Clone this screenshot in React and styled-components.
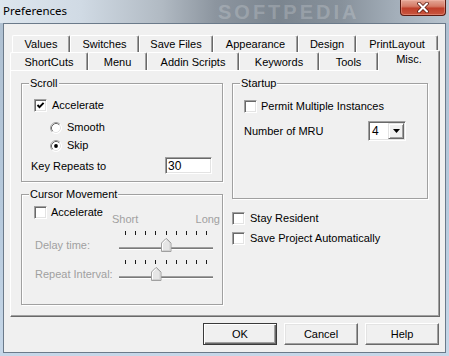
import React from 'react';
import styled, { createGlobalStyle, css } from 'styled-components';

const Global = createGlobalStyle`
  html, body { margin: 0; padding: 0; }
  body {
    width: 449px; height: 356px; overflow: hidden;
    font-family: "Liberation Sans", Arial, sans-serif; font-size: 11px; color: #000;
    background: #b4c8dc;
  }
  * { box-sizing: border-box; }
`;

const Window = styled.div`
  width: 449px; height: 356px;
  display: flex; flex-direction: column;
  background: linear-gradient(180deg, #aebfd0 0%, #b7cadd 60%, #c6d7e8 100%);
`;

const TitleBar = styled.div`
  position: relative; flex: none; height: 23px;
  display: flex; align-items: flex-start;
  background: linear-gradient(90deg, #dde6ee 0%, #d0dae4 18%, #b1bac3 36%, #8c959f 48%, #7b858f 62%, #87919b 76%, #a3aeb9 88%, #b8c4cf 100%);
`;

const Title = styled.span`
  padding: 3px 0 0 3px;
  font-family: "Noto Sans", "Open Sans", sans-serif; font-size: 11.5px; line-height: 15px;
  color: #000; position: relative; z-index: 1;
`;

const Watermark = styled.span`
  position: absolute; left: 218px; top: 2px;
  font-family: "Liberation Sans", Arial, sans-serif; font-weight: bold; font-size: 20px; line-height: 20px;
  letter-spacing: 3px; color: rgba(255, 255, 255, 0.2);
`;

const CloseButton = styled.div`
  margin-left: auto; margin-right: 3px; width: 46px; height: 16px;
  border: 1px solid #5c1a10; border-top: none; border-radius: 0 0 4px 4px;
  background: linear-gradient(180deg, #e4a897 0%, #d57a66 42%, #bf3f2a 55%, #c9563f 100%);
  box-shadow: inset 0 0 0 1px rgba(255, 200, 190, 0.35);
  display: flex; align-items: center; justify-content: center;
  position: relative; z-index: 1;
`;

const Client = styled.div`
  flex: 1; margin: 0 3px 3px 3px;
  border: 1px solid #6b7a8a; background: #f0f0f0;
  padding: 11px 5px 7px 6px;
  display: flex; flex-direction: column;
`;

const TabRow = styled.div`
  display: flex; height: ${p => p.$h}px; padding-left: ${p => p.$indent}px;
  position: relative; z-index: ${p => p.$z};
`;

const Tab = styled.div`
  width: ${p => p.$w}px; height: 100%;
  border: 1px solid; border-color: #fff #696969 transparent #fff; border-bottom: none;
  box-shadow: inset -1px 0 0 #a0a0a0;
  border-radius: 2px 2px 0 0;
  background: #f0f0f0;
  display: flex; align-items: center; justify-content: center;
  padding-top: ${p => p.$pt || 0}px;
  white-space: nowrap; line-height: 13px;
  position: relative;
  ${p => p.$selected && css`
    height: calc(100% + 3px); margin-top: -2px; padding-top: 0; padding-bottom: 4px; z-index: 3;
  `}
`;

const Panel = styled.div`
  position: relative; z-index: 1;
  height: 247px;
  border: 1px solid; border-color: #fff #696969 #696969 #fff;
  box-shadow: inset -1px -1px 0 #a0a0a0;
  display: grid; grid-template-columns: 202px 196px; column-gap: 9px; align-items: start;
  padding: 12px 0 0 10px;
`;

const Column = styled.div`
  display: flex; flex-direction: column;
`;

const GroupBox = styled.div`
  position: relative;
  border: 1px solid #a0a0a0;
  box-shadow: 1px 1px 0 #fff, inset 1px 1px 0 #fff;
  display: flex; flex-direction: column;
  margin-top: ${p => p.$mt || 0}px;
  padding-bottom: ${p => p.$pb || 0}px;
`;

const Legend = styled.span`
  position: absolute; top: -7px; left: 7px;
  padding: 0 1px; background: #f0f0f0; line-height: 13px;
`;

const CheckRow = styled.label`
  display: flex; align-items: center; gap: ${p => p.$gap ?? 5}px;
  height: 13px; line-height: 13px;
  margin-top: ${p => p.$mt || 0}px; padding-left: ${p => p.$pl || 0}px;
  white-space: nowrap;
`;

const Box = styled.span`
  flex: none; width: 13px; height: 13px;
  background: #fff;
  border: 1px solid; border-color: #a0a0a0 #fff #fff #a0a0a0;
  box-shadow: inset 1px 1px 0 #696969, inset -1px -1px 0 #e3e3e3;
  display: flex; align-items: center; justify-content: center;
`;

const FieldRow = styled.div`
  display: flex; align-items: center; justify-content: space-between;
  margin-top: ${p => p.$mt || 0}px;
  padding: 0 ${p => p.$pr || 0}px 0 ${p => p.$pl || 0}px;
  height: ${p => p.$h}px;
`;

const TextField = styled.input`
  width: 47px; height: 17px; margin: 0;
  background: #fff; color: #000;
  border: 1px solid; border-color: #a0a0a0 #fff #fff #a0a0a0;
  box-shadow: inset 1px 1px 0 #696969, inset -1px -1px 0 #e3e3e3;
  font: 12px "Liberation Sans", Arial, sans-serif; padding: 0 2px; outline: none;
`;

const ScaleRow = styled.div`
  display: flex; justify-content: space-between; align-items: flex-start;
  margin-top: 11px; padding: 0 2px 0 12px; height: 20px;
`;

const ScaleLabels = styled.div`
  width: 108px; margin-top: 7px;
  display: flex; justify-content: space-between;
  color: #a0a0a0; line-height: 13px;
`;

const SliderRow = styled.div`
  display: flex; margin-top: ${p => p.$mt || 0}px; padding-left: 13px;
`;

const SliderLabel = styled.span`
  width: 84px; padding-top: 8px; color: #a0a0a0; line-height: 13px; white-space: nowrap;
`;

const SliderBox = styled.div`
  position: relative; width: 94px; height: 20px;
`;

const Ticks = styled.div`
  display: flex; justify-content: space-between; padding: 0 6px; height: 4px;
`;

const Tick = styled.span`
  width: 1px; height: 4px; background: #1a1a1a;
`;

const Track = styled.div`
  margin-top: 12px; height: 3px;
  border-top: 1px solid #a0a0a0; border-bottom: 1px solid #fff;
  background: #7a7a7a;
`;

const Thumb = styled.svg`
  position: absolute; top: 7px;
`;

const Combo = styled.div`
  width: 38px; height: 20px;
  background: #fff;
  border: 1px solid; border-color: #a0a0a0 #fff #fff #a0a0a0;
  box-shadow: inset 1px 1px 0 #696969, inset -1px -1px 0 #e3e3e3;
  padding: 1px 1px 1px 2px;
  display: flex; align-items: center;
  font-size: 12px;
`;

const ComboValue = styled.span`
  flex: 1; padding-left: 1px;
`;

const ComboButton = styled.span`
  width: 16px; height: 16px; flex: none;
  background: #f0f0f0;
  border: 1px solid; border-color: #e3e3e3 #696969 #696969 #e3e3e3;
  box-shadow: inset 1px 1px 0 #fff, inset -1px -1px 0 #a0a0a0;
  display: flex; align-items: center; justify-content: center;
`;

const ButtonBar = styled.div`
  display: flex; justify-content: flex-end; gap: 7px;
  margin-top: 6px; padding-right: 1px;
`;

const Button = styled.button`
  width: 74px; height: 22px; padding: 0; margin: 0;
  font: 11px "Liberation Sans", Arial, sans-serif; color: #000;
  background: #f0f0f0;
  border: 1px solid; border-color: #fff #696969 #696969 #fff;
  box-shadow: inset -1px -1px 0 #a0a0a0, inset 1px 1px 0 #e3e3e3;
  ${p => p.$default && css`
    border-color: #3a3a3a;
    box-shadow: inset 1px 1px 0 #fff, inset -1px -1px 0 #696969, inset -2px -2px 0 #a0a0a0;
  `}
`;

const CheckMark = () => (
  <svg width="9" height="9" viewBox="0 0 9 9">
    <polyline points="1.5,4 3.5,6.2 7.6,1.8" fill="none" stroke="#000" strokeWidth="1.9" />
  </svg>
);

const Checkbox = ({ checked, label, ...rest }) => (
  <CheckRow {...rest}>
    <Box>{checked && <CheckMark />}</Box>
    <span>{label}</span>
  </CheckRow>
);

const RadioGlyph = ({ checked }) => (
  <svg width="12" height="12" viewBox="0 0 12 12" style={{ flex: 'none' }}>
    <circle cx="6" cy="6" r="5.5" fill="#fff" stroke="#fff" />
    <path d="M2.11 9.89 A5.5 5.5 0 0 1 9.89 2.11" fill="none" stroke="#a0a0a0" />
    <path d="M2.82 9.18 A4.5 4.5 0 0 1 9.18 2.82" fill="none" stroke="#696969" />
    <path d="M9.18 2.82 A4.5 4.5 0 0 1 2.82 9.18" fill="none" stroke="#e3e3e3" />
    {checked && <circle cx="6" cy="6" r="1.9" fill="#000" />}
  </svg>
);

const Radio = ({ checked, label, ...rest }) => (
  <CheckRow {...rest}>
    <RadioGlyph checked={checked} />
    <span>{label}</span>
  </CheckRow>
);

const Slider = ({ value, steps = 9 }) => {
  const pitch = 82 / (steps - 1);
  const left = 6 + value * pitch - 5;
  return (
    <SliderBox>
      <Ticks>
        {Array.from({ length: steps }).map((_, i) => <Tick key={i} />)}
      </Ticks>
      <Track />
      <Thumb width="11" height="14" viewBox="0 0 11 14" style={{ left: `${left}px` }}>
        <polygon points="0.5,13.5 0.5,5 5,0.5 5.5,0.5 10,5 10,13.5" fill="#e6e6e6" stroke="#a0a0a0" />
        <polyline points="1.5,12.5 1.5,5.4 5.2,1.7" fill="none" stroke="#fff" />
        <polyline points="5.5,1.5 9,5 9,12.5 1.5,12.5" fill="none" stroke="#d0d0d0" />
      </Thumb>
    </SliderBox>
  );
};

const row1 = [
  ['Values', 58], ['Switches', 69], ['Save Files', 74],
  ['Appearance', 85], ['Design', 58], ['PrintLayout', 82],
];
const row2 = [
  ['ShortCuts', 78], ['Menu', 59], ['Addin Scripts', 92],
  ['Keywords', 80], ['Tools', 59], ['Misc.', 62, true],
];

export default function App() {
  return (
    <>
      <Global />
      <Window>
        <TitleBar>
          <Watermark>SOFTPEDIA</Watermark>
          <Title>Preferences</Title>
          <CloseButton>
            <svg width="14" height="11" viewBox="0 0 14 11">
              <path d="M3 1.5 L11 9.5 M11 1.5 L3 9.5" stroke="#5a1a10" strokeWidth="3.6" strokeLinecap="round" />
              <path d="M3 1.5 L11 9.5 M11 1.5 L3 9.5" stroke="#fff" strokeWidth="2.1" strokeLinecap="round" />
            </svg>
          </CloseButton>
        </TitleBar>
        <Client>
          <TabRow $h={17} $indent={2} $z={1}>
            {row1.map(([t, w]) => <Tab key={t} $w={w}>{t}</Tab>)}
          </TabRow>
          <TabRow $h={18} $indent={0} $z={2}>
            {row2.map(([t, w, s]) => <Tab key={t} $w={w} $selected={s} $pt={1}>{t}</Tab>)}
          </TabRow>
          <Panel>
            <Column>
              <GroupBox $pb={7}>
                <Legend>Scroll</Legend>
                <Checkbox checked label="Accelerate" $mt={15} $pl={12} />
                <Radio label="Smooth" $mt={9} $pl={28} />
                <Radio checked label="Skip" $mt={5} $pl={28} />
                <FieldRow $mt={5} $pl={9} $pr={10} $h={17}>
                  <span>Key Repeats to</span>
                  <TextField readOnly defaultValue="30" />
                </FieldRow>
              </GroupBox>
              <GroupBox $mt={12} $pb={23}>
                <Legend>Cursor Movement</Legend>
                <ScaleRow>
                  <Checkbox label="Accelerate" $gap={4} />
                  <ScaleLabels>
                    <span>Short</span>
                    <span>Long</span>
                  </ScaleLabels>
                </ScaleRow>
                <SliderRow $mt={5}>
                  <SliderLabel>Delay time:</SliderLabel>
                  <Slider value={4} />
                </SliderRow>
                <SliderRow $mt={8}>
                  <SliderLabel>Repeat Interval:</SliderLabel>
                  <Slider value={3} />
                </SliderRow>
              </GroupBox>
            </Column>
            <Column>
              <GroupBox $pb={57}>
                <Legend>Startup</Legend>
                <Checkbox label="Permit Multiple Instances" $mt={16} $pl={11} $gap={4} />
                <FieldRow $mt={8} $pl={11} $pr={21} $h={20}>
                  <span>Number of MRU</span>
                  <Combo>
                    <ComboValue>4</ComboValue>
                    <ComboButton>
                      <svg width="7" height="4" viewBox="0 0 7 4">
                        <polygon points="0,0 7,0 3.5,4" fill="#000" />
                      </svg>
                    </ComboButton>
                  </Combo>
                </FieldRow>
              </GroupBox>
              <Checkbox label="Stay Resident" $mt={13} />
              <Checkbox label="Save Project Automatically" $mt={7} />
            </Column>
          </Panel>
          <ButtonBar>
            <Button $default>OK</Button>
            <Button>Cancel</Button>
            <Button>Help</Button>
          </ButtonBar>
        </Client>
      </Window>
    </>
  );
}
